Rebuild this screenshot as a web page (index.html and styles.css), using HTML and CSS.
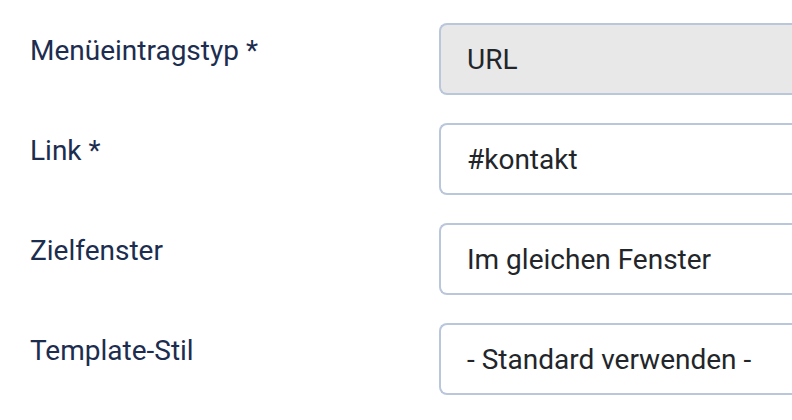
FILE: index.html
```html
<!DOCTYPE html>
<html lang="de">
<head>
<meta charset="utf-8">
<link rel="stylesheet" href="styles.css">
</head>
<body>
<form class="form">
  <div class="row">
    <label class="label">Menüeintragstyp *</label>
    <div class="control readonly">URL</div>
  </div>
  <div class="row">
    <label class="label">Link *</label>
    <div class="control">#kontakt</div>
  </div>
  <div class="row">
    <label class="label">Zielfenster</label>
    <div class="control">Im gleichen Fenster</div>
  </div>
  <div class="row">
    <label class="label">Template-Stil</label>
    <div class="control">- Standard verwenden -</div>
  </div>
</form>
</body>
</html>
```
FILE: styles.css
```css
html, body {
  margin: 0;
  padding: 0;
  background: #ffffff;
  overflow: hidden;
  width: 792px;
  height: 420px;
}
.form {
  display: flex;
  flex-direction: column;
  gap: 28px;
  padding: 23px 0 0 30px;
  font-family: Roboto, "Noto Sans", sans-serif;
  font-size: 28px;
}
.row {
  display: grid;
  grid-template-columns: 409px 1fr;
  align-items: start;
}
.label {
  color: #1c2d4f;
  line-height: 42px;
  padding-top: 7px;
}
.control {
  box-sizing: border-box;
  height: 72px;
  border: 2px solid #bac7db;
  border-right-width: 0;
  border-radius: 8px 0 0 8px;
  padding: 0 26px;
  display: flex;
  align-items: center;
  color: #22262a;
  background: #ffffff;
  white-space: nowrap;
}
.control.readonly {
  background: #e8e8e8;
}
```
